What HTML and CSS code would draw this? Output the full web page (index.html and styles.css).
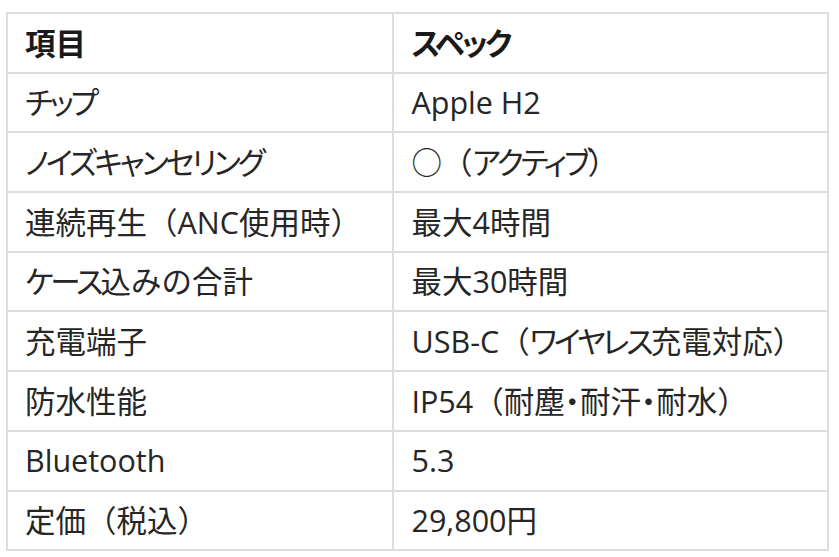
FILE: index.html
```html
<!DOCTYPE html>
<html lang="ja">
<head>
<meta charset="utf-8">
<title>スペック</title>
<link rel="stylesheet" href="styles.css">
</head>
<body>
<div class="wrap">
<table class="spec">
  <thead>
    <tr><th class="c1">項目</th><th class="c2"><span class="kana">スペック</span></th></tr>
  </thead>
  <tbody>
    <tr><td class="c1"><span class="kana">チップ</span></td><td class="c2">Apple H2</td></tr>
    <tr><td class="c1"><span class="kana">ノイズキャンセリング</span></td><td class="c2">○（<span class="kana">アクティブ</span>）</td></tr>
    <tr><td class="c1">連続再生（ANC使用時）</td><td class="c2">最大4時間</td></tr>
    <tr><td class="c1"><span class="kana">ケース</span>込みの合計</td><td class="c2">最大30時間</td></tr>
    <tr><td class="c1">充電端子</td><td class="c2">USB-C（<span class="kana">ワイヤレス</span>充電対応）</td></tr>
    <tr><td class="c1">防水性能</td><td class="c2">IP54（耐塵<span class="dot">・</span>耐汗<span class="dot">・</span>耐水）</td></tr>
    <tr><td class="c1">Bluetooth</td><td class="c2">5.3</td></tr>
    <tr><td class="c1">定価（税込）</td><td class="c2">29,800円</td></tr>
  </tbody>
</table>
</div>
</body>
</html>
```
FILE: styles.css
```css
html, body {
  margin: 0;
  padding: 0;
  background: #ffffff;
}
.wrap {
  padding: 12px 10px 0 6px;
}
.spec {
  width: 823px;
  border-collapse: separate;
  border-spacing: 0;
  border-top: 2px solid #dddddd;
  border-left: 2px solid #dddddd;
  font-family: "Open Sans", "Noto Sans CJK JP", sans-serif;
  font-size: 30.5px;
  color: #262626;
  table-layout: fixed;
}
.spec th,
.spec td {
  height: 57.7px;
  padding: 0 16px 0 17px;
  border-right: 2px solid #dddddd;
  border-bottom: 2px solid #dddddd;
  text-align: left;
  vertical-align: middle;
  line-height: 1.2;
  white-space: nowrap;
  box-sizing: content-box;
}
.spec th {
  font-weight: 700;
  color: #1a1a1a;
}
.spec td {
  font-weight: 400;
}
.spec .c1 {
  width: 351px;
}
.spec .c2 {
  width: 399px;
}
.kana {
  font-feature-settings: "palt";
  letter-spacing: -3px;
}
.dot {
  font-feature-settings: "palt";
}
```
